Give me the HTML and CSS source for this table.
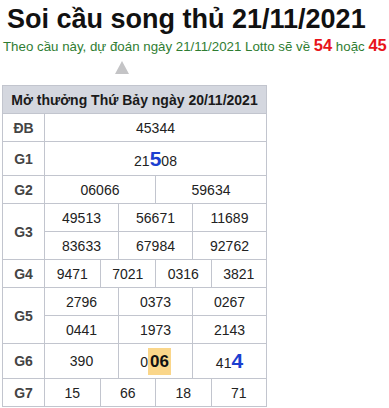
FILE: index.html
```html
<!DOCTYPE html>
<html lang="vi">
<head>
<meta charset="utf-8">
<title>Soi cầu song thủ</title>
<link rel="stylesheet" href="styles.css">
</head>
<body>
<h1 class="title">Soi cầu song thủ 21/11/2021</h1>
<p class="sub">Theo cầu này, dự đoán ngày 21/11/2021 Lotto sẽ về <b class="red">54</b> hoặc <b class="red">45</b></p>
<div class="arrow"></div>
<table class="kq">
  <colgroup>
    <col class="c-lbl">
    <col><col><col><col><col><col><col><col><col><col><col><col>
  </colgroup>
  <thead>
    <tr><th colspan="13" class="head">Mở thưởng Thứ Bảy ngày 20/11/2021</th></tr>
  </thead>
  <tbody>
    <tr class="r"><td class="lbl">ĐB</td><td colspan="12">45344</td></tr>
    <tr class="r tall"><td class="lbl">G1</td><td colspan="12">21<span class="hit">5</span>08</td></tr>
    <tr class="r"><td class="lbl">G2</td><td colspan="6">06066</td><td colspan="6">59634</td></tr>
    <tr class="r"><td class="lbl" rowspan="2">G3</td><td colspan="4">49513</td><td colspan="4">56671</td><td colspan="4">11689</td></tr>
    <tr class="r"><td colspan="4">83633</td><td colspan="4">67984</td><td colspan="4">92762</td></tr>
    <tr class="r"><td class="lbl">G4</td><td colspan="3">9471</td><td colspan="3">7021</td><td colspan="3">0316</td><td colspan="3">3821</td></tr>
    <tr class="r"><td class="lbl" rowspan="2">G5</td><td colspan="4">2796</td><td colspan="4">0373</td><td colspan="4">0267</td></tr>
    <tr class="r"><td colspan="4">0441</td><td colspan="4">1973</td><td colspan="4">2143</td></tr>
    <tr class="r tall6"><td class="lbl">G6</td><td colspan="4">390</td><td colspan="4">0<span class="mark">06</span></td><td colspan="4">41<span class="hit">4</span></td></tr>
    <tr class="r last"><td class="lbl">G7</td><td colspan="3">15</td><td colspan="3">66</td><td colspan="3">18</td><td colspan="3">71</td></tr>
  </tbody>
</table>
</body>
</html>
```
FILE: styles.css
```css
html, body {
  margin: 0;
  padding: 0;
  background: #fff;
}
body {
  font-family: "Liberation Sans", Arial, sans-serif;
  color: #222;
}
.title {
  margin: 0;
  padding: 4px 0 0 7px;
  font-size: 27px;
  line-height: 31px;
  font-weight: bold;
  color: #111;
}
.sub {
  margin: 2px 0 0 3px;
  font-size: 13.3px;
  line-height: 16px;
  color: #2f7d32;
  white-space: nowrap;
}
.red {
  color: #e8141b;
  font-size: 16.5px;
}
.arrow {
  width: 0;
  height: 0;
  margin: 6px 0 0 115px;
  border-left: 7.5px solid transparent;
  border-right: 7.5px solid transparent;
  border-bottom: 13px solid #c4c4c6;
}
.kq {
  margin: 11px 0 0 2px;
  width: 265px;
  border-collapse: collapse;
  table-layout: fixed;
  font-size: 14px;
}
.c-lbl {
  width: 42px;
}
.kq th, .kq td {
  border: 1px solid #c2c5ce;
  padding: 0;
  text-align: center;
  vertical-align: middle;
}
.head {
  background: #d4d7df;
  height: 27px;
  font-weight: bold;
  font-size: 14px;
  color: #1a1a1a;
}
.r td {
  height: 27px;
  color: #222;
}
.r .lbl {
  font-weight: bold;
  color: #444;
}
.r.tall td {
  height: 33px;
}
.r.tall6 td {
  height: 34px;
}
.hit {
  color: #1b3fd0;
  font-weight: bold;
  font-size: 21px;
}
.mark {
  display: inline-block;
  background: #fad68a;
  color: #111;
  font-weight: bold;
  font-size: 17px;
  line-height: 27px;
  padding: 0 2px;
}
```
